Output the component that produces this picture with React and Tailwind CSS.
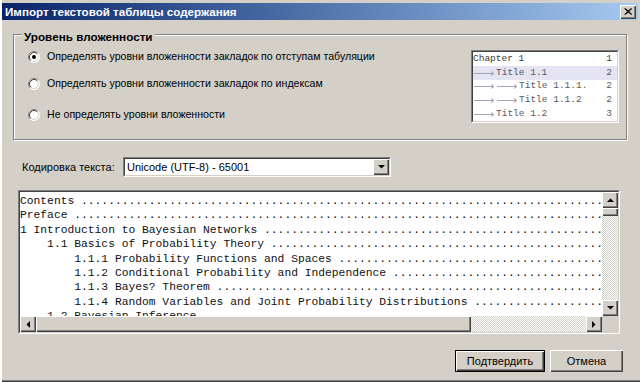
import { useState } from 'react'

const ui = "font-['Liberation_Sans',Arial,sans-serif]"
const mono = "font-['Liberation_Mono','Courier_New',monospace]"
const raised = 'bg-[#d4d0c8] shadow-[inset_1px_1px_0_#ffffff,inset_-1px_-1px_0_#404040,inset_-2px_-2px_0_#808080]'
const checker = 'bg-[repeating-conic-gradient(#ffffff_0%_25%,#d4d0c8_0%_50%)] bg-[length:2px_2px]'

const DOTS = ' ' + '.'.repeat(120)

const tocLines = [
  'Contents',
  'Preface',
  '1 Introduction to Bayesian Networks',
  '    1.1 Basics of Probability Theory',
  '        1.1.1 Probability Functions and Spaces',
  '        1.1.2 Conditional Probability and Independence',
  '        1.1.3 Bayes? Theorem',
  '        1.1.4 Random Variables and Joint Probability Distributions',
  '    1.2 Bayesian Inference',
]

const previewRows = [
  { lvl: 0, t: 'Chapter 1', n: '1' },
  { lvl: 1, t: 'Title 1.1', n: '2', hi: true },
  { lvl: 2, t: 'Title 1.1.1.', n: '2' },
  { lvl: 2, t: 'Title 1.1.2', n: '2' },
  { lvl: 1, t: 'Title 1.2', n: '3' },
]

function Radio({ checked }) {
  return (
    <svg width="12" height="12" viewBox="0 0 12 12" className="shrink-0">
      <circle cx="6" cy="6" r="5.5" fill="#ffffff" />
      <path d="M2.11 9.89 A5.5 5.5 0 0 1 9.89 2.11" stroke="#808080" fill="none" />
      <path d="M9.89 2.11 A5.5 5.5 0 0 1 2.11 9.89" stroke="#ffffff" fill="none" />
      <path d="M2.82 9.18 A4.5 4.5 0 0 1 9.18 2.82" stroke="#404040" fill="none" />
      <path d="M9.18 2.82 A4.5 4.5 0 0 1 2.82 9.18" stroke="#d4d0c8" fill="none" />
      {checked && <circle cx="6" cy="6" r="2" fill="#000000" />}
    </svg>
  )
}

function Arrow({ dir }) {
  const pts = {
    up: '0,4 3.5,0.5 7,4',
    down: '0,0 3.5,3.5 7,0',
    left: '4,0 0.5,3.5 4,7',
    right: '0,0 3.5,3.5 0,7',
  }[dir]
  const vertical = dir === 'up' || dir === 'down'
  return (
    <svg width={vertical ? 7 : 4} height={vertical ? 4 : 7} viewBox={vertical ? '0 0 7 4' : '0 0 4 7'}>
      <polygon points={pts} fill="#000000" />
    </svg>
  )
}

function ScrollBtn({ dir }) {
  return (
    <div className={`w-[16px] h-[16px] shrink-0 flex items-center justify-center ${raised}`}>
      <Arrow dir={dir} />
    </div>
  )
}

function Connector({ lvl }) {
  if (lvl === 0) return null
  const w = lvl === 1 ? 23 : 46
  return (
    <svg width={w} height="8" viewBox={`0 0 ${w} 8`} className="shrink-0">
      <g stroke="#a4a4b4" strokeWidth="1" fill="none">
        <path d="M1 4.5 H20 M18 2.5 L21 4.5 L18 6.5" />
        {lvl === 2 && <path d="M24 4.5 H43 M41 2.5 L44 4.5 L41 6.5" />}
      </g>
    </svg>
  )
}

function Sunken({ className, innerClassName, children }) {
  return (
    <div className={`border border-t-[#808080] border-l-[#808080] border-r-white border-b-white ${className}`}>
      <div className={`h-full border border-t-[#404040] border-l-[#404040] border-r-[#d4d0c8] border-b-[#d4d0c8] bg-white ${innerClassName}`}>
        {children}
      </div>
    </div>
  )
}

export default function App() {
  const [level, setLevel] = useState(0)

  const options = [
    'Определять уровни вложенности закладок по отступам табуляции',
    'Определять уровни вложенности закладок по индексам',
    'Не определять уровни вложенности',
  ]

  return (
    <div className={`w-[640px] h-[382px] bg-[#d4d0c8] overflow-hidden flex flex-col ${ui} text-[11px] text-black shadow-[inset_2px_0_0_#ffffff,inset_0_-1px_0_#404040,inset_0_-2px_0_#808080]`}>
      {/* Title bar */}
      <div className="mt-[3px] mx-[2px] h-[17px] flex items-center bg-linear-to-r from-[#0a246a] to-[#a6caf0] pl-[3px] pr-[2px]">
        <span className="font-bold text-white text-[11.6px]">Импорт текстовой таблицы содержания</span>
        <div className={`ml-auto w-[16px] h-[14px] flex items-center justify-center ${raised}`}>
          <svg width="8" height="7" viewBox="0 0 8 7">
            <path d="M0.5 0.5 L7 6.5 M1.5 0.5 L8 6.5 M7 0.5 L0.5 6.5 M8 0.5 L1.5 6.5" stroke="#000000" strokeWidth="1" />
          </svg>
        </div>
      </div>

      {/* Group box */}
      <div className="mt-[14px] ml-[13px] w-[614px] h-[106px] shrink-0 relative border border-[#808080] shadow-[inset_1px_1px_0_#ffffff,1px_1px_0_#ffffff] flex">
        <span className="absolute left-[8px] top-[-5px] px-[2px] bg-[#d4d0c8] font-bold text-[11.7px] leading-[14px]">
          Уровень вложенности
        </span>
        <div className="flex flex-col pl-[14px] pt-[15px]">
          {options.map((o, i) => (
            <div
              key={o}
              onClick={() => setLevel(i)}
              className={`h-[14px] flex items-center gap-[7px] ${i === 1 ? 'mt-[13px]' : ''} ${i === 2 ? 'mt-[17px]' : ''}`}
            >
              <Radio checked={level === i} />
              <span className="text-[10.6px]">{o}</span>
            </div>
          ))}
        </div>
        <Sunken className="ml-auto mt-[15px] mr-[7px] w-[148px] h-[73px]" innerClassName="overflow-hidden">
          {previewRows.map((r) => (
            <div
              key={r.t}
              className={`h-[13.8px] flex items-center pr-[5px] ${mono} text-[9.5px] ${r.lvl === 0 ? 'text-[#404040]' : 'text-[#5a5a5a]'} ${r.hi ? 'bg-[#e4e4f2]' : ''}`}
            >
              <Connector lvl={r.lvl} />
              <span className="whitespace-pre">{r.t}</span>
              <span className="ml-auto">{r.n}</span>
            </div>
          ))}
        </Sunken>
      </div>

      {/* Encoding */}
      <div className="mt-[17px] h-[20px] flex items-center shrink-0">
        <span className="pl-[22px] w-[123px]">Кодировка текста:</span>
        <Sunken className="w-[268px] h-[20px]" innerClassName="flex items-center">
          <span className="pl-[2px]">Unicode (UTF-8) - 65001</span>
          <div className={`ml-auto w-[16px] h-[16px] flex items-center justify-center ${raised}`}>
            <Arrow dir="down" />
          </div>
        </Sunken>
      </div>

      {/* Text area */}
      <Sunken className="mt-[13px] ml-[18px] w-[602px] h-[144px] shrink-0" innerClassName="grid grid-cols-[1fr_16px] grid-rows-[1fr_16px] overflow-hidden">
        <div className={`overflow-hidden pt-[2px] ${mono} text-[11.3px] leading-[14.4px] whitespace-pre text-[#111111]`}>
          {tocLines.map((l) => (
            <div key={l}>{l + DOTS}</div>
          ))}
        </div>
        <div className="flex flex-col">
          <ScrollBtn dir="up" />
          <div className={`h-[8px] shrink-0 ${raised}`} />
          <div className={`flex-1 ${checker}`} />
          <ScrollBtn dir="down" />
        </div>
        <div className="flex">
          <ScrollBtn dir="left" />
          <div className={`w-[435px] shrink-0 ${raised}`} />
          <div className={`flex-1 ${checker}`} />
          <ScrollBtn dir="right" />
        </div>
        <div className="bg-[#d4d0c8]" />
      </Sunken>

      {/* Buttons */}
      <div className="mt-[16px] flex justify-end pr-[17px] gap-[5px]">
        <button className={`w-[90px] h-[22px] border border-black ${raised}`}>Подтвердить</button>
        <button className={`w-[73px] h-[22px] ${raised}`}>Отмена</button>
      </div>
    </div>
  )
}
